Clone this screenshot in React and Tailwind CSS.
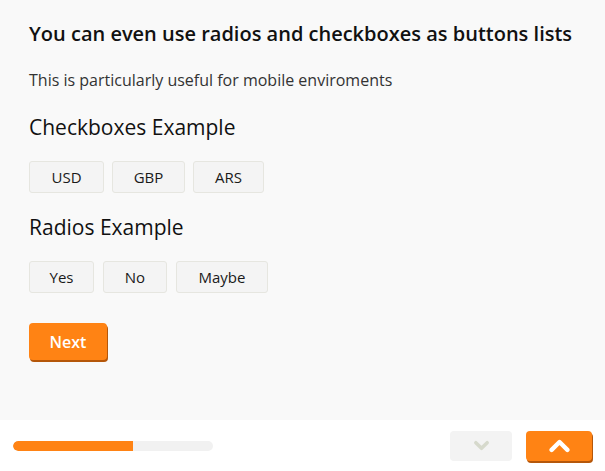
import { useState } from "react";

const ChevronDown = ({ className }) => (
  <svg viewBox="0 0 24 24" className={className} fill="none" stroke="currentColor" strokeWidth="5" strokeLinecap="round" strokeLinejoin="round">
    <path d="M4 8l8 8 8-8" />
  </svg>
);

const ChevronUp = ({ className }) => (
  <svg viewBox="0 0 24 24" className={className} fill="none" stroke="currentColor" strokeWidth="5" strokeLinecap="round" strokeLinejoin="round">
    <path d="M3 17l9-9 9 9" />
  </svg>
);

const ToggleButton = ({ label, width, active, onClick }) => (
  <button
    type="button"
    onClick={onClick}
    className={`h-[32px] ${width} rounded-[3px] border border-[#e6e6e0] bg-[#f4f4f4] text-[15px] text-[#1a1a1a] ${active ? "bg-[#ececec]" : ""}`}
  >
    {label}
  </button>
);

export default function App() {
  const [currencies, setCurrencies] = useState([]);
  const [answer, setAnswer] = useState(null);

  const toggleCurrency = (c) =>
    setCurrencies((prev) => (prev.includes(c) ? prev.filter((x) => x !== c) : [...prev, c]));

  return (
    <div className="w-[605px] h-[471px] flex flex-col bg-[#f9f9f9] text-[#111] font-['Open_Sans',sans-serif]">
      <div className="flex-1 px-[29px] pt-[20px]">
        <h1 className="text-[20px] leading-[28px] font-semibold">You can even use radios and checkboxes as buttons lists</h1>
        <p className="mt-[21px] text-[16px] leading-[22px] text-[#333]">This is particularly useful for mobile enviroments</p>

        <h2 className="mt-[22px] text-[21px] leading-[28px]">Checkboxes Example</h2>
        <div className="mt-[20px] flex gap-[8px]">
          <ToggleButton label="USD" width="w-[75px]" active={currencies.includes("USD")} onClick={() => toggleCurrency("USD")} />
          <ToggleButton label="GBP" width="w-[73px]" active={currencies.includes("GBP")} onClick={() => toggleCurrency("GBP")} />
          <ToggleButton label="ARS" width="w-[71px]" active={currencies.includes("ARS")} onClick={() => toggleCurrency("ARS")} />
        </div>

        <h2 className="mt-[20px] text-[21px] leading-[28px]">Radios Example</h2>
        <div className="mt-[20px] flex gap-[9px]">
          <ToggleButton label="Yes" width="w-[65px]" active={answer === "Yes"} onClick={() => setAnswer("Yes")} />
          <ToggleButton label="No" width="w-[64px]" active={answer === "No"} onClick={() => setAnswer("No")} />
          <ToggleButton label="Maybe" width="w-[92px]" active={answer === "Maybe"} onClick={() => setAnswer("Maybe")} />
        </div>

        <button
          type="button"
          className="mt-[30px] w-[78px] h-[37px] rounded-[4px] bg-[#ff8314] text-white text-[16px] font-semibold shadow-[1px_2px_0_#b5570a]"
        >
          Next
        </button>
      </div>

      <div className="h-[51px] bg-white flex items-center px-[13px]">
        <div className="w-[200px] h-[10px] rounded-full bg-[#f1f1f1] overflow-hidden">
          <div className="h-full bg-[#ff8314] rounded-l-full" style={{ width: "60%" }} />
        </div>
        <div className="ml-auto flex items-center gap-[14px]">
          <button type="button" className="w-[62px] h-[30px] rounded-[4px] bg-[#f3f3f3] flex items-center justify-center text-[#d6d9cc]">
            <ChevronDown className="w-[17px] h-[17px]" />
          </button>
          <button type="button" className="w-[66px] h-[30px] rounded-[4px] bg-[#ff8314] flex items-center justify-center text-white shadow-[1px_2px_0_#b5570a]">
            <ChevronUp className="w-[21px] h-[21px]" />
          </button>
        </div>
      </div>
    </div>
  );
}
